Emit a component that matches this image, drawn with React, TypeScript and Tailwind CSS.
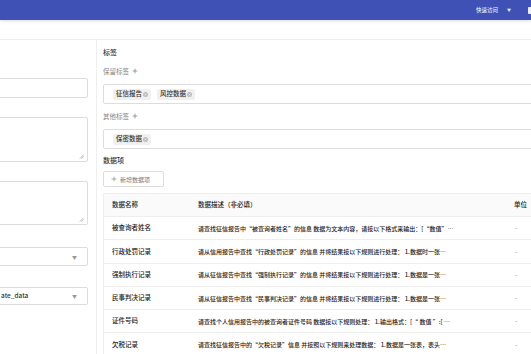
import React from "react";

const rows = [
  ["被查询者姓名", "请查找征信报告中“被查询者姓名”的信息 数据为文本内容，请按以下格式来输出：[“数值”…"],
  ["行政处罚记录", "请从信用报告中查找“行政处罚记录”的信息 并将结果按以下规则进行处理： 1.数据时一张…"],
  ["强制执行记录", "请从征信报告中查找“强制执行记录”的信息 并将结果按以下规则进行处理： 1.数据是一张…"],
  ["民事判决记录", "请从征信报告中查找“民事判决记录”的信息 并将结果按以下规则进行处理： 1.数据是一张…"],
  ["证件号码", "请查找个人信用报告中的被查询者证件号码 数据按以下规则处理： 1.输出格式：[“ 数值 ”:[ …"],
  ["欠税记录", "请查找征信报告中的“欠税记录”信息 并按照以下规则来处理数据： 1.数据是一张表，表头…"],
];

function Plus({ className = "" }: { className?: string }) {
  return (
    <svg viewBox="0 0 10 10" className={className} fill="none" stroke="currentColor" strokeWidth="1">
      <path d="M5 1v8M1 5h8" />
    </svg>
  );
}

function Tag({ label }: { label: string }) {
  return (
    <span className="flex items-center gap-[1px] rounded-[2px] bg-[#f0f0f0] px-[3px] h-[11px] text-[6.5px] font-medium text-[#333]">
      {label}
      <svg viewBox="0 0 10 10" className="h-[5px] w-[5px]">
        <circle cx="5" cy="5" r="5" fill="#bdbdbd" />
        <path d="M3.3 3.3l3.4 3.4M6.7 3.3l-3.4 3.4" stroke="#fff" strokeWidth="1.2" />
      </svg>
    </span>
  );
}

function Resize() {
  return (
    <svg viewBox="0 0 6 6" className="absolute bottom-[2px] right-[3px] h-[5px] w-[5px]" stroke="#888" strokeWidth="0.7">
      <path d="M1 5.5L5.5 1M3 5.5L5.5 3" />
    </svg>
  );
}

function Caret() {
  return <span className="text-[5px] text-[#999]">▼</span>;
}

export default function App() {
  return (
    <div
      className="h-[354px] w-[531px] overflow-hidden bg-white"
      style={{ fontFamily: '"Noto Sans CJK SC", "Noto Sans", sans-serif' }}
    >
      <header className="relative z-10 flex h-[20px] items-center justify-end bg-[#3f51b5] shadow-[0_1px_3px_rgba(0,0,0,0.15)]">
        <span className="text-[5.5px] text-white">快速访问</span>
        <span className="ml-[9px] text-[4px] text-white/90">▼</span>
        <span className="ml-[17px] -mr-[3px] h-[7px] w-[6px] rounded-[1px] bg-white/90" />
      </header>

      <div className="h-[20px] border-b border-[#eee]" />

      <div className="flex">
        {/* left form */}
        <div className="w-[97px] shrink-0 border-r border-[#eee]">
          <div className="-ml-[4px] w-[92px] pt-[38px] flex flex-col">
            <div className="h-[20px] rounded-[2px] border border-[#ddd]" />
            <div className="relative mt-[19px] h-[45px] rounded-[2px] border border-[#ddd]">
              <Resize />
            </div>
            <div className="relative mt-[19px] h-[44px] rounded-[2px] border border-[#ddd]">
              <Resize />
            </div>
            <div className="mt-[22px] flex h-[19px] items-center justify-end rounded-[2px] border border-[#ddd] pr-[10px]">
              <Caret />
            </div>
            <div className="mt-[21px] flex h-[18px] items-center justify-between rounded-[2px] border border-[#ddd] pl-[4px] pr-[10px]">
              <span className="text-[6.5px] font-medium text-[#333]">ate_data</span>
              <Caret />
            </div>
          </div>
        </div>

        {/* right form */}
        <div className="min-w-0 flex-1 overflow-hidden pl-[6px]">
          <div className="w-[460px] pt-[7px]">
            <div className="text-[7px] font-medium leading-[10px] text-[#333]">标签</div>
            <div className="mt-[9px] flex items-center gap-[3px] text-[6.5px] leading-[10px] text-[#888]">
              保留标签
              <Plus className="h-[6px] w-[6px] text-[#666]" />
            </div>
            <div className="mt-[8px] flex h-[20px] items-center gap-[6px] rounded-[2px] border border-[#ddd] pl-[9px]">
              <Tag label="征信报告" />
              <Tag label="风控数据" />
            </div>
            <div className="mt-[7px] flex items-center gap-[3px] text-[6.5px] leading-[10px] text-[#888]">
              其他标签
              <Plus className="h-[6px] w-[6px] text-[#666]" />
            </div>
            <div className="mt-[8px] flex h-[20px] items-center rounded-[2px] border border-[#ddd] pl-[9px]">
              <Tag label="保密数据" />
            </div>
            <div className="mt-[6px] text-[7px] font-medium leading-[10px] text-[#333]">数据项</div>
            <div className="mt-[6px] flex h-[16px] w-[61px] items-center gap-[3px] rounded-[2px] border border-[#ddd] pl-[7px] text-[6px] text-[#777]">
              <Plus className="h-[6px] w-[6px] text-[#777]" />
              新增数据项
            </div>

            <div className="mt-[6px] border-t border-l border-[#eee] text-[6.5px] text-[#222]">
              <div className="flex h-[23px] items-center border-b border-[#eee] bg-[#fafafa] font-medium">
                <div className="w-[94px] shrink-0 pl-[8px]">数据名称</div>
                <div className="w-[316px] shrink-0">数据描述（非必填）</div>
                <div>单位</div>
              </div>
              {rows.map(([name, desc]) => (
                <div key={name} className="flex h-[23.3px] items-center border-b border-[#eee] font-medium">
                  <div className="w-[94px] shrink-0 pl-[8px]">{name}</div>
                  <div className="w-[316px] shrink-0 text-[6px]">{desc}</div>
                  <div className="pl-[1px] text-[#999]">-</div>
                </div>
              ))}
            </div>
          </div>
        </div>
      </div>
    </div>
  );
}
